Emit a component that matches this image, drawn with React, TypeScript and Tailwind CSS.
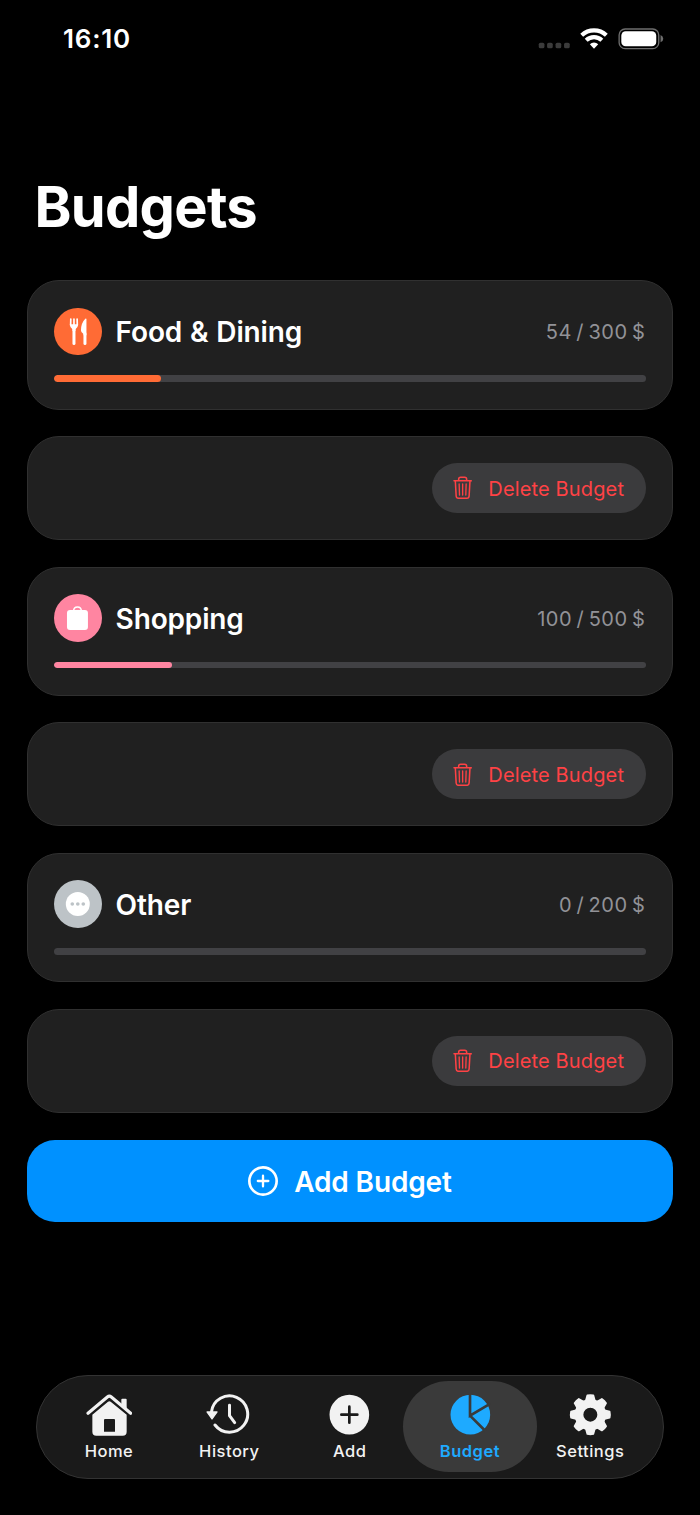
import type { ReactNode } from 'react';

interface Budget {
  name: string;
  spent: number;
  limit: number;
  iconBg: string;
  barColor: string;
  icon: ReactNode;
}

const ForkKnifeIcon = () => (
  <svg viewBox="102 113 143 143" className="size-full">
    <g fill="none" stroke="white" strokeLinecap="round">
      <path d="M152.500 146 L152 164 M162 146 V172 M171.500 146 L172 164" strokeWidth="5" />
      <path d="M162 174 V220" strokeWidth="9" />
      <path d="M195 190 V220" strokeWidth="9" />
    </g>
    <path d="M149.500 162 H174.500 Q174.500 172 166.500 177 V182 H157.500 V177 Q149.500 172 149.500 162 Z" fill="white" />
    <path d="M199.500 146 Q199 143 196 145 Q183 158 183 180 Q183 188 190.500 191 V195 H199.500 Z" fill="white" />
  </svg>
);

const BagIcon = () => (
  <svg viewBox="102 102 143 143" className="size-full">
    <rect x="141" y="150" width="63" height="60" rx="9" fill="white" />
    <path d="M161 153 Q161 141 172.500 141 Q184 141 184 153" fill="none" stroke="white" strokeWidth="4.500" />
  </svg>
);

const DotsIcon = () => (
  <svg viewBox="102 105 143 143" className="size-full">
    <circle cx="173.500" cy="177" r="36" fill="white" />
    <g fill="#bdc3c7">
      <circle cx="157" cy="177" r="5.500" />
      <circle cx="173.500" cy="177" r="5.500" />
      <circle cx="190" cy="177" r="5.500" />
    </g>
  </svg>
);

const TrashIcon = () => (
  <svg viewBox="161 619 58 70" className="w-[19.300px] h-[23.300px]" fill="none" stroke="#ff4245" strokeWidth="4.600" strokeLinecap="round" strokeLinejoin="round">
    <path d="M164 633.500 H216" />
    <path d="M178 632 V629 Q178 623 184 623 H196 Q202 623 202 629 V632" />
    <path d="M168 634 L170.500 679 Q171 686 177.500 686 H202.500 Q209 686 209.500 679 L212 634" />
    <path d="M179.500 643 L180.500 676 M190 643 V676 M200.500 643 L199.500 676" strokeWidth="4" />
  </svg>
);

const HomeIcon = () => (
  <svg viewBox="198 100 140 130" className="w-[46.700px] h-[43.300px]">
    <path d="M204 161 L262 112 Q268 107 274 112 L332 161" fill="none" stroke="#f2f2f2" strokeWidth="9.500" strokeLinecap="round" strokeLinejoin="round" />
    <path d="M304 120 Q304 117 307 117 H317 Q320 117 320 120 V153 L304 139 Z" fill="#f2f2f2" />
    <path
      d="M217 165 L264 126 Q268 123 272 126 L320 165 V216 Q320 228 308 228 H229 Q217 228 217 216 Z M252 181 V216 H285 V181 Q285 178 282 178 H255 Q252 178 252 181 Z"
      fill="#f2f2f2"
      fillRule="evenodd"
    />
  </svg>
);

const HistoryIcon = () => (
  <svg viewBox="558 100 140 130" className="w-[46.700px] h-[43.300px]">
    <g fill="none" stroke="#f2f2f2" strokeWidth="9" strokeLinecap="round" strokeLinejoin="round">
      <path d="M585 196 A54.500 54.500 0 1 0 574.500 156" />
      <path d="M628.500 137 V168 L644 189" />
    </g>
    <path d="M561 157 H591 L576 178 Z" fill="#f2f2f2" stroke="#f2f2f2" strokeWidth="4" strokeLinejoin="round" />
  </svg>
);

const AddIcon = () => (
  <svg viewBox="170 100 140 130" className="w-[46.700px] h-[43.300px]">
    <circle cx="240" cy="165" r="59.500" fill="#f2f2f2" />
    <path d="M216 165 H264 M240 141 V189" stroke="#1a1a1a" strokeWidth="8" strokeLinecap="round" />
  </svg>
);

const PieIcon = () => (
  <svg viewBox="20 100 140 130" className="w-[46.700px] h-[43.300px]">
    <circle cx="90" cy="165" r="59.500" fill="#1eaaff" />
    <path d="M89 98 V168 L150 132 M89 168 L136 215" fill="none" stroke="#3a3a3a" strokeWidth="8" />
  </svg>
);

const GearIcon = () => (
  <svg viewBox="383 100 140 130" className="w-[46.700px] h-[43.300px]">
    <g transform="translate(453 165)">
      <circle r="34" fill="none" stroke="#f2f2f2" strokeWidth="26" />
      {[0, 45, 90, 135, 180, 225, 270, 315].map((deg) => (
        <path
          key={deg}
          d="M-14 -40 L-9 -58 Q0 -60 9 -58 L14 -40 Z"
          transform={`rotate(${deg})`}
          fill="#f2f2f2"
          stroke="#f2f2f2"
          strokeWidth="5"
          strokeLinejoin="round"
        />
      ))}
    </g>
  </svg>
);

const budgets: Budget[] = [
  { name: 'Food & Dining', spent: 54, limit: 300, iconBg: 'bg-[#ff6b35]', barColor: 'bg-[#ff6b35]', icon: <ForkKnifeIcon /> },
  { name: 'Shopping', spent: 100, limit: 500, iconBg: 'bg-[#ff85a1]', barColor: 'bg-[#ff85a1]', icon: <BagIcon /> },
  { name: 'Other', spent: 0, limit: 200, iconBg: 'bg-[#bdc3c7]', barColor: 'bg-[#bdc3c7]', icon: <DotsIcon /> },
];

const tabs = [
  { label: 'Home', icon: <HomeIcon /> },
  { label: 'History', icon: <HistoryIcon /> },
  { label: 'Add', icon: <AddIcon /> },
  { label: 'Budget', icon: <PieIcon /> },
  { label: 'Settings', icon: <GearIcon /> },
];

function StatusBar() {
  return (
    <div className="flex h-[77px] items-center justify-between pl-[63px] pr-[36px]">
      <span className="text-[26px] font-[560] tracking-[0.8px] text-white">16:10</span>
      <svg viewBox="116 50 378 70" className="w-[126px] h-[23.300px]">
        {/* signal */}
        <g fill="#3b3b3b">
          <rect x="118" y="97" width="17" height="17" rx="5" />
          <rect x="143" y="97" width="17" height="17" rx="5" />
          <rect x="168.500" y="97" width="17" height="17" rx="5" />
          <rect x="194" y="97" width="17" height="17" rx="5" />
        </g>
        {/* wifi */}
        <g fill="none" stroke="white" strokeWidth="12.500">
          <path d="M247 75 A54 54 0 0 1 321 75" />
          <path d="M260.500 90 A34 34 0 0 1 307.500 90" />
        </g>
        <path d="M284 115 L271.500 101.500 A18 18 0 0 1 296.500 101.500 Z" fill="white" />
        {/* battery */}
        <rect x="359.500" y="56" width="119" height="59" rx="18" fill="none" stroke="#6e6e6e" strokeWidth="4" />
        <rect x="366" y="63" width="105" height="45" rx="13" fill="white" />
        <path d="M484 74 Q492 77 492 85 Q492 93 484 96 Z" fill="#6e6e6e" />
      </svg>
    </div>
  );
}

function BudgetCard({ budget }: { budget: Budget }) {
  const percent = (budget.spent / budget.limit) * 100;

  return (
    <div className="h-[129.200px] rounded-[32px] border border-[#303030] bg-[#202020] px-[26px] pt-[26.300px]">
      <div className="flex items-center">
        <div className={`size-[47.600px] shrink-0 rounded-full ${budget.iconBg}`}>{budget.icon}</div>
        <span className="ml-3.5 pt-[1.500px] text-[28px] leading-8 font-[560] tracking-[-0.150px] [word-spacing:1px] text-white">{budget.name}</span>
        <span className="mr-[0.700px] ml-auto pt-[1.500px] text-[20px] leading-6 tracking-[0.5px] [word-spacing:-1.700px] text-[#929297]">
          {budget.spent} / {budget.limit} $
        </span>
      </div>
      <div className="mt-[20.200px] h-[6.700px] overflow-hidden rounded-full bg-[#414144]">
        <div className={`h-full rounded-full ${budget.barColor}`} style={{ width: `${percent}%` }} />
      </div>
    </div>
  );
}

function DeleteCard() {
  return (
    <div className="flex h-[104px] items-center justify-end rounded-[32px] border border-[#303030] bg-[#202020] px-[26px]">
      <button className="flex h-[50px] w-[214px] items-center rounded-full bg-[#3b3b3d] pl-[21px]">
        <TrashIcon />
        <span className="ml-4 pt-[1.500px] text-[20px] tracking-[0.150px] whitespace-nowrap text-[#ff4245]">Delete Budget</span>
      </button>
    </div>
  );
}

function TabBar() {
  const active = 'Budget';

  return (
    <nav className="mx-9 mt-[152.900px] flex h-[104.500px] items-center rounded-full border-[1.500px] border-[#333333] bg-[#1a1a1a] px-[5px]">
      {tabs.map((tab) => (
        <button
          key={tab.label}
          className={`flex h-[91px] w-[134px] shrink-0 flex-col items-center rounded-full pt-[12px] not-first:-ml-[13.700px] ${
            tab.label === active ? 'bg-[#3a3a3a] text-[#1eaaff] font-semibold' : 'text-[#f2f2f2] font-medium'
          }`}
        >
          {tab.icon}
          <span className="mt-[4.300px] text-[16.500px] leading-5 tracking-[0.5px]">{tab.label}</span>
        </button>
      ))}
    </nav>
  );
}

export default function App() {
  return (
    <div className="h-[1515px] w-[700px] overflow-hidden bg-black font-['Inter',sans-serif]">
      <StatusBar />

      <h1 className="mt-[102px] pl-[34.500px] text-[56px] leading-[56px] font-bold tracking-[-0.7px] text-white">Budgets</h1>

      <div className="mx-[27px] mt-[45.400px] flex flex-col gap-[26.550px]">
        {budgets.map((budget) => (
          <div key={budget.name} className="flex flex-col gap-[26.550px]">
            <BudgetCard budget={budget} />
            <DeleteCard />
          </div>
        ))}
        <button className="mt-[0.600px] flex h-[82px] items-center justify-center gap-4 rounded-[28px] bg-[#0091ff]">
          <svg viewBox="146 109 90 90" className="size-[30px]" fill="none" stroke="white" strokeLinecap="round">
            <circle cx="191" cy="154" r="41" strokeWidth="8" />
            <path d="M175.500 154 H207 M191 138 V170" strokeWidth="7" />
          </svg>
          <span className="pt-[1.500px] text-[28px] leading-8 font-[560] tracking-[-0.150px] text-white">Add Budget</span>
        </button>
      </div>

      <TabBar />
    </div>
  );
}
